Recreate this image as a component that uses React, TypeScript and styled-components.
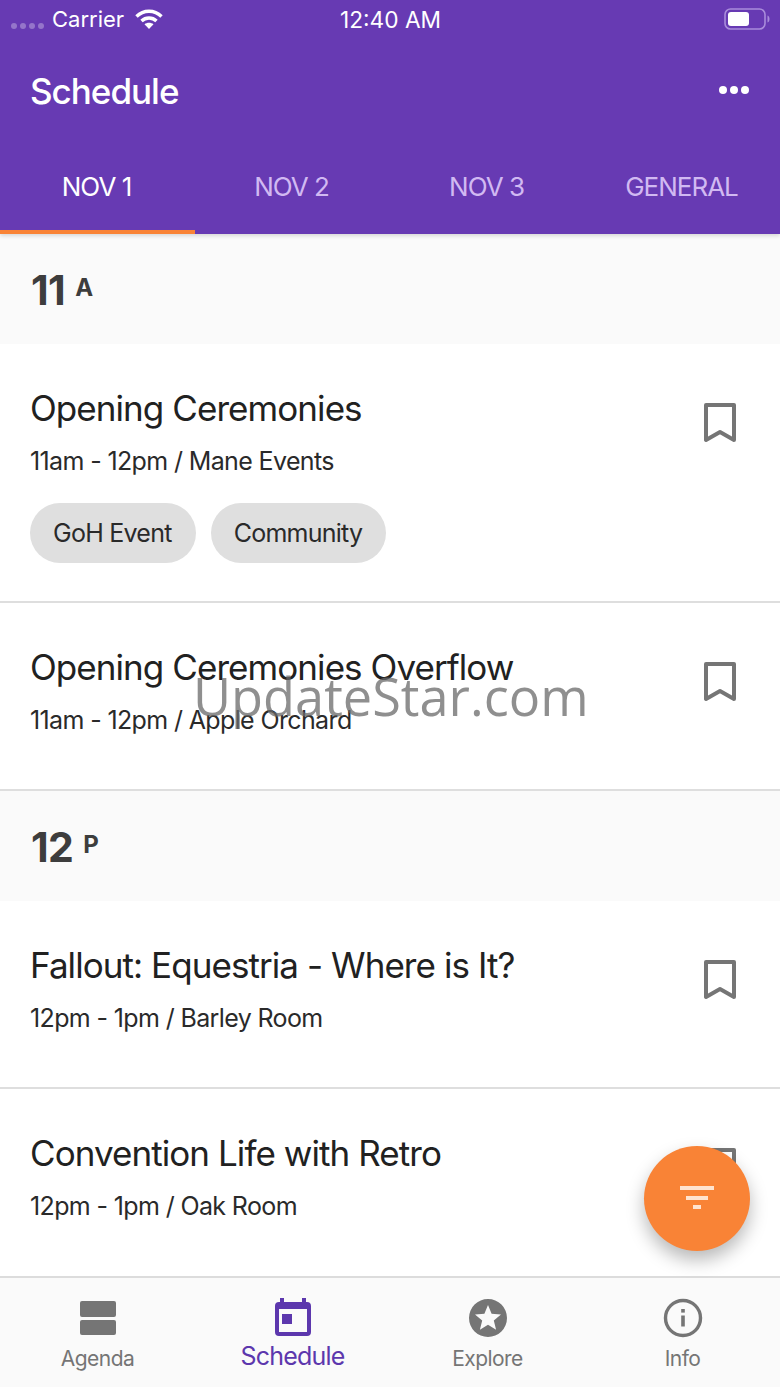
import React from "react";
import styled, { createGlobalStyle } from "styled-components";

const Global = createGlobalStyle`
  html, body { margin: 0; padding: 0; background: #fff; }
  * { box-sizing: border-box; }
`;

const Screen = styled.div`
  position: relative;
  width: 780px;
  height: 1387px;
  overflow: hidden;
  display: flex;
  flex-direction: column;
  background: #fff;
  font-family: Inter, "Liberation Sans", sans-serif;
`;

const Header = styled.header`
  height: 234px;
  flex: none;
  background: #673ab3;
  color: #fff;
  display: flex;
  flex-direction: column;
  position: relative;
  z-index: 2;
  box-shadow: 0 2px 4px rgba(0, 0, 0, 0.14);
`;

const StatusBar = styled.div`
  height: 38px;
  flex: none;
  display: grid;
  grid-template-columns: 1fr auto 1fr;
  align-items: center;
  padding: 0 10px 0 11px;
  font-size: 22px;
`;

const StatusLeft = styled.div`
  display: flex;
  align-items: center;
  gap: 8px;
`;

const StatusTime = styled.span`
  font-size: 22.7px;
`;

const WifiIcon = styled.svg`
  margin-left: 3px;
`;

const Signal = styled.div`
  display: flex;
  gap: 3px;
  margin-top: 14px;
`;

const SignalDot = styled.span`
  width: 6px;
  height: 6px;
  border-radius: 50%;
  background: rgba(255, 255, 255, 0.3);
`;

const StatusRight = styled.div`
  display: flex;
  justify-content: flex-end;
`;

const TitleRow = styled.div`
  height: 106px;
  flex: none;
  display: flex;
  align-items: center;
  justify-content: space-between;
  padding: 0 30px 0 30px;
`;

const Title = styled.h1`
  margin: 0;
  font-size: 35px;
  font-weight: 500;
  letter-spacing: -1px;
`;

const More = styled.svg`
  width: 32px;
  height: 8px;
  margin-bottom: 2px;
`;

const Tabs = styled.nav`
  flex: 1;
  display: grid;
  grid-template-columns: repeat(4, 1fr);
`;

const TopTab = styled.div<{ $active?: boolean }>`
  display: flex;
  align-items: center;
  justify-content: center;
  padding: 0 2px 2px 0;
  font-size: 26px;
  font-weight: 400;
  letter-spacing: -1px;
  color: ${(p) => (p.$active ? "#fff" : "#d1b9f2")};
  border-bottom: 4px solid ${(p) => (p.$active ? "#f98336" : "transparent")};
`;

const List = styled.main`
  flex: 1;
  min-height: 0;
  overflow: hidden;
  display: flex;
  flex-direction: column;
`;

const HourRow = styled.div`
  height: 110px;
  flex: none;
  background: #fafafa;
  display: flex;
  align-items: flex-start;
  gap: 10px;
  padding: 32px 31px 0;
  color: #3d3d3d;
  font-weight: 700;
`;

const HourNum = styled.span`
  font-size: 41px;
  line-height: 48px;
  letter-spacing: -0.6px;
`;

const HourMark = styled.span`
  font-size: 24px;
  line-height: 44px;
  font-weight: 700;
`;

const Item = styled.article<{ $height: number; $last?: boolean }>`
  height: ${(p) => p.$height}px;
  flex: none;
  display: flex;
  justify-content: space-between;
  padding: 40px 44px 0 30px;
  border-bottom: ${(p) => (p.$last ? "0" : "2px solid #dedede")};
`;

const ItemBody = styled.div`
  display: flex;
  flex-direction: column;
`;

const ItemTitle = styled.div`
  font-size: 35px;
  line-height: 48px;
  letter-spacing: -0.93px;
  color: #212121;
`;

const ItemMeta = styled.div`
  margin-top: 14px;
  font-size: 25px;
  line-height: 30px;
  letter-spacing: -0.63px;
  color: #2a2a2a;
`;

const Chips = styled.div`
  display: flex;
  gap: 15px;
  margin-top: 27px;
`;

const Chip = styled.span`
  height: 60px;
  padding: 0 24px 0 23px;
  border-radius: 30px;
  background: #dfdfdf;
  display: flex;
  align-items: center;
  font-size: 25px;
  letter-spacing: -0.75px;
  color: #2a2a2a;
`;

const Bookmark = styled.svg`
  width: 32px;
  height: 40px;
  margin-top: 19px;
  flex: none;
`;

const BottomBar = styled.footer`
  height: 111px;
  flex: none;
  background: #fafafa;
  border-top: 2px solid #dcdcdc;
  display: grid;
  grid-template-columns: repeat(4, 1fr);
  position: relative;
  z-index: 1;
`;

const BarTab = styled.div<{ $active?: boolean }>`
  display: flex;
  flex-direction: column;
  align-items: center;
  padding-top: 20px;
  gap: ${(p) => (p.$active ? "4px" : "7px")};
  color: ${(p) => (p.$active ? "#5c37ad" : "#757575")};
  font-size: ${(p) => (p.$active ? "25px" : "21px")};
  line-height: 28px;
  letter-spacing: ${(p) => (p.$active ? "-0.8px" : "-0.55px")};
`;

const BarIcon = styled.svg`
  width: 40px;
  height: 40px;
  flex: none;
`;

const Fab = styled.div`
  position: absolute;
  left: 644px;
  top: 1146px;
  width: 106px;
  height: 105px;
  border-radius: 50%;
  background: #f98336;
  box-shadow: 0 9px 18px rgba(0, 0, 0, 0.28);
  display: flex;
  align-items: center;
  justify-content: center;
  z-index: 3;
`;

const FabIcon = styled.svg`
  width: 34px;
  height: 24px;
  margin-bottom: 2px;
`;

const Watermark = styled.div`
  position: absolute;
  left: 193px;
  top: 661px;
  font-family: "Open Sans", sans-serif;
  font-size: 52.3px;
  line-height: 70px;
  color: rgba(105, 105, 105, 0.75);
  z-index: 4;
  white-space: nowrap;
`;

const BookmarkIcon = () => (
  <Bookmark viewBox="0 0 32 40" fill="none">
    <path d="M2 2h28v35l-14-8L2 37z" stroke="#757575" strokeWidth="4" strokeLinejoin="round" />
  </Bookmark>
);

const items1 = [
  { t: "Opening Ceremonies", m: "11am - 12pm / Mane Events", h: 259, chips: ["GoH Event", "Community"] },
  { t: "Opening Ceremonies Overflow", m: "11am - 12pm / Apple Orchard", h: 188 },
];
const items2 = [
  { t: "Fallout: Equestria - Where is It?", m: "12pm - 1pm / Barley Room", h: 188 },
  { t: "Convention Life with Retro", m: "12pm - 1pm / Oak Room", h: 189, last: true },
];

type Ev = { t: string; m: string; h: number; chips?: string[]; last?: boolean };

const EventRow = ({ e }: { e: Ev }) => (
  <Item $height={e.h} $last={e.last}>
    <ItemBody>
      <ItemTitle>{e.t}</ItemTitle>
      <ItemMeta>{e.m}</ItemMeta>
      {e.chips && (
        <Chips>
          {e.chips.map((c) => (
            <Chip key={c}>{c}</Chip>
          ))}
        </Chips>
      )}
    </ItemBody>
    <BookmarkIcon />
  </Item>
);

export default function App() {
  return (
    <Screen>
      <Global />
      <Header>
        <StatusBar>
          <StatusLeft>
            <Signal>
              <SignalDot />
              <SignalDot />
              <SignalDot />
              <SignalDot />
            </Signal>
            <span>Carrier</span>
            <WifiIcon width="28" height="22" viewBox="0 0 28 22" fill="none">
              <path d="M1.5 8.5C8.5 1.5 19.5 1.5 26.5 8.5" stroke="#fff" strokeWidth="3.4" />
              <path d="M6.5 13C10.8 9 17.2 9 21.5 13" stroke="#fff" strokeWidth="3.4" />
              <path d="M14 21l-4.5-4.8c2.6-2 6.4-2 9 0z" fill="#fff" />
            </WifiIcon>
          </StatusLeft>
          <StatusTime>12:40 AM</StatusTime>
          <StatusRight>
            <svg width="46" height="22" viewBox="0 0 46 22" fill="none">
              <rect x="1" y="1" width="40" height="20" rx="5.5" stroke="#a98cdb" strokeWidth="1.6" />
              <rect x="4" y="4" width="21" height="14" rx="3" fill="#fff" />
              <path d="M43.5 7.5c1.5.5 2 2 2 3.5s-.5 3-2 3.5z" fill="#a98cdb" />
            </svg>
          </StatusRight>
        </StatusBar>
        <TitleRow>
          <Title>Schedule</Title>
          <More viewBox="0 0 32 8" fill="#fff">
            <circle cx="5" cy="4" r="4" />
            <circle cx="16" cy="4" r="4" />
            <circle cx="27" cy="4" r="4" />
          </More>
        </TitleRow>
        <Tabs>
          <TopTab $active>NOV 1</TopTab>
          <TopTab>NOV 2</TopTab>
          <TopTab>NOV 3</TopTab>
          <TopTab>GENERAL</TopTab>
        </Tabs>
      </Header>
      <List>
        <HourRow>
          <HourNum>11</HourNum>
          <HourMark>A</HourMark>
        </HourRow>
        {items1.map((e) => (
          <EventRow key={e.t} e={e} />
        ))}
        <HourRow>
          <HourNum>12</HourNum>
          <HourMark>P</HourMark>
        </HourRow>
        {items2.map((e) => (
          <EventRow key={e.t} e={e} />
        ))}
      </List>
      <BottomBar>
        <BarTab>
          <BarIcon viewBox="0 0 40 40" fill="#757575">
            <rect x="2" y="3" width="36" height="16" rx="2" />
            <rect x="2" y="22" width="36" height="15" rx="2" />
          </BarIcon>
          <span>Agenda</span>
        </BarTab>
        <BarTab $active>
          <BarIcon viewBox="0 0 40 40">
            <path
              fill="#5c37ad"
              fillRule="evenodd"
              d="M7 0h4v4h18V0h4v4h1c2.700 0 4 1.500 4 4v26c0 2.500-1.300 4-4 4H6c-2.700 0-4-1.500-4-4V8c0-2.500 1.300-4 4-4h1zM6 11v23h28V11zM9 16h10v10H9z"
            />
          </BarIcon>
          <span>Schedule</span>
        </BarTab>
        <BarTab>
          <BarIcon viewBox="0 0 40 40">
            <path
              fill="#757575"
              fillRule="evenodd"
              d="M20 1a19 19 0 1 0 0 38 19 19 0 0 0 0-38zM20 7l3.600 8.800 9.400.7-7.200 6 2.300 9.200L20 26.700l-8.100 5 2.300-9.200-7.200-6 9.400-.7z"
            />
          </BarIcon>
          <span>Explore</span>
        </BarTab>
        <BarTab>
          <BarIcon viewBox="0 0 40 40" fill="none">
            <circle cx="20" cy="20" r="17.500" stroke="#757575" strokeWidth="3.400" />
            <rect x="18.200" y="17.500" width="3.600" height="11" fill="#757575" />
            <rect x="18.200" y="11" width="3.600" height="3.600" fill="#757575" />
          </BarIcon>
          <span>Info</span>
        </BarTab>
      </BottomBar>
      <Fab>
        <FabIcon viewBox="0 0 34 24" fill="#ffe3cf">
          <rect x="0" y="0" width="34" height="4" />
          <rect x="6" y="10" width="22" height="4" />
          <rect x="13" y="19" width="8" height="4" />
        </FabIcon>
      </Fab>
      <Watermark>UpdateStar.com</Watermark>
    </Screen>
  );
}
